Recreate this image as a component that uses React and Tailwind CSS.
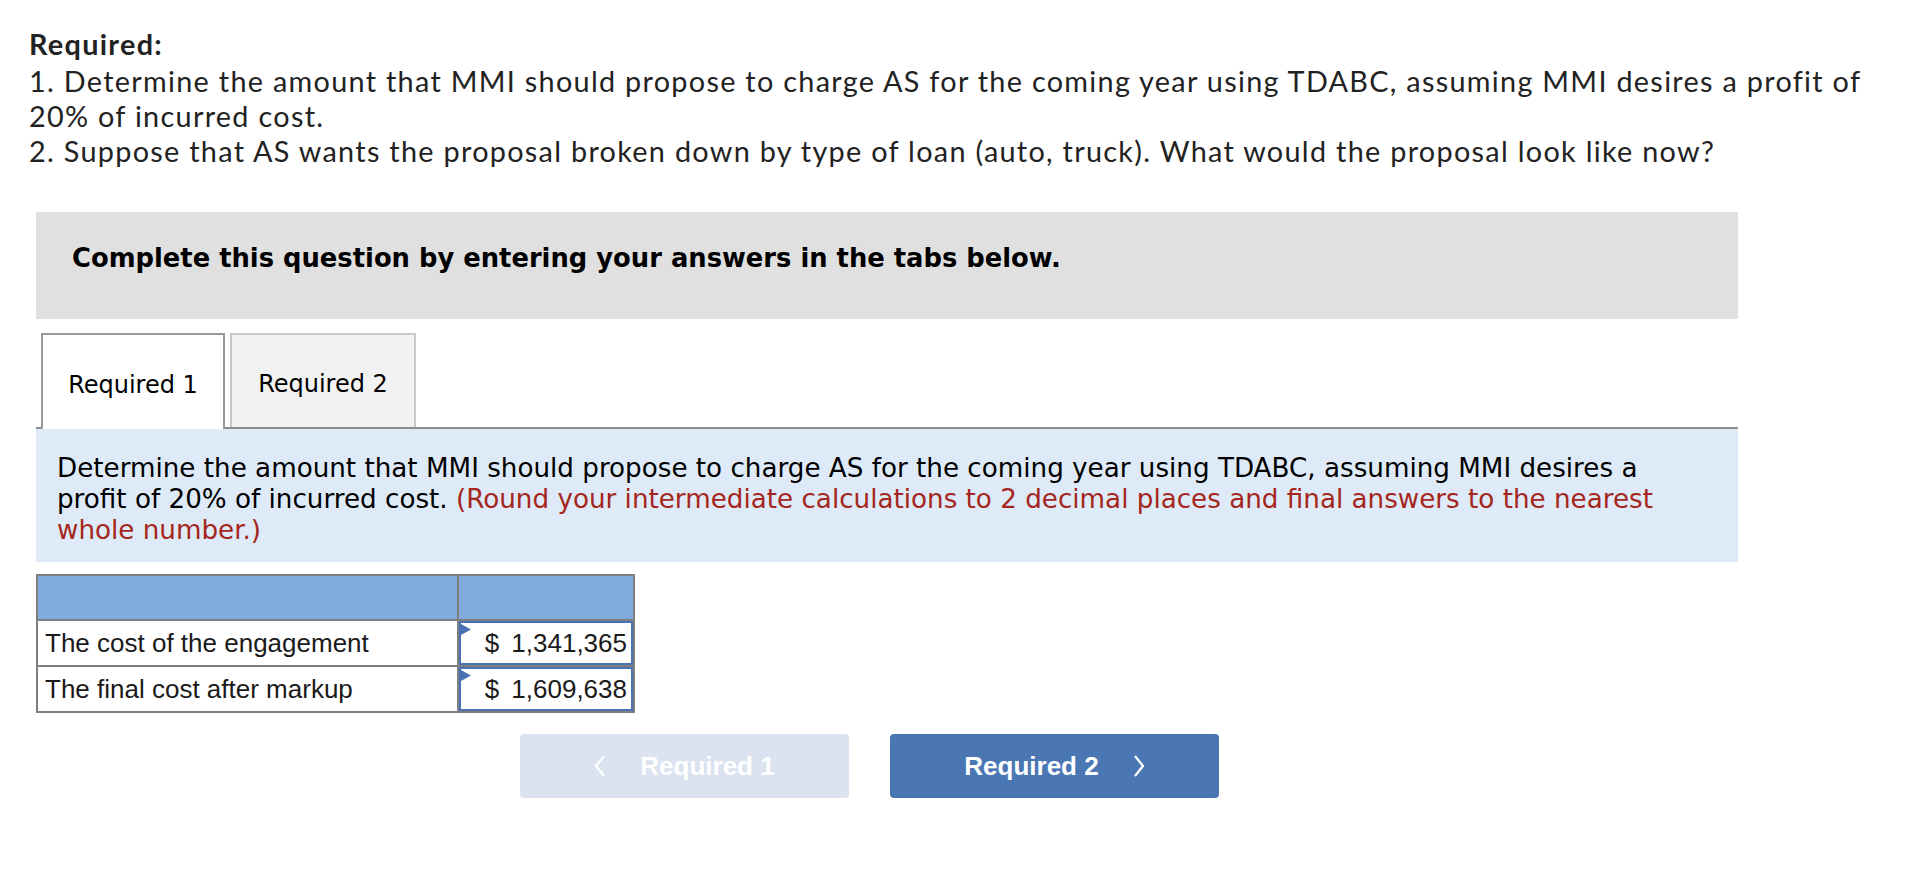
import React from "react";

const dejavu = { fontFamily: '"DejaVu Sans", Verdana, sans-serif' };

function Flag() {
  return (
    <svg className="absolute left-0 top-[1px]" width="10" height="11" viewBox="0 0 10 11">
      <polygon points="0,0 10,5.5 0,11" fill="#4a72b2" />
    </svg>
  );
}

function Chevron({ dir }) {
  return (
    <svg width="12" height="24" viewBox="0 0 12 24" className="shrink-0">
      {dir === "left" ? (
        <polyline points="10,2 2,12 10,22" fill="none" stroke="#ffffff" strokeWidth="2.2" />
      ) : (
        <polyline points="2,2 10,12 2,22" fill="none" stroke="#ffffff" strokeWidth="2.2" />
      )}
    </svg>
  );
}

export default function App() {
  return (
    <div className="w-[1922px] h-[878px] bg-white pt-[27px]">
      <div
        className="pl-[29px] text-[28.8px] leading-[35px] tracking-[1.3px] text-[#222222] whitespace-nowrap"
        style={{ fontFamily: 'Lato, "Open Sans", sans-serif' }}
      >
        <div className="font-bold">Required:</div>
        <div className="mt-[2px]">
          <div>
            1. Determine the amount that MMI should propose to charge AS for the coming year using TDABC, assuming MMI desires a profit of
          </div>
          <div>20% of incurred cost.</div>
          <div>
            2. Suppose that AS wants the proposal broken down by type of loan (auto, truck). What would the proposal look like now?
          </div>
        </div>
      </div>

      <div className="ml-[36px] w-[1702px] mt-[43px]">
        <div className="h-[107px] bg-[#e0e0e0] pl-[36px] pt-[31px]">
          <div className="font-bold text-[25.8px] leading-[30px] text-black" style={dejavu}>
            Complete this question by entering your answers in the tabs below.
          </div>
        </div>

        <div className="mt-[14px] flex gap-[5px] pl-[5px] border-b-2 border-[#8c8c8c]">
          <div
            className="relative z-10 -mb-[2px] flex h-[96px] w-[184px] items-center justify-center border-2 border-b-0 border-[#999999] bg-white text-[24px] text-black"
            style={dejavu}
          >
            <span className="mt-[5px]">Required 1</span>
          </div>
          <div
            className="flex h-[94px] w-[186px] items-center justify-center border-2 border-b-0 border-[#c8c8c8] bg-[#f2f2f2] text-[24px] text-black"
            style={dejavu}
          >
            <span className="mt-[5px]">Required 2</span>
          </div>
        </div>

        <div
          className="h-[133px] bg-[#deeaf7] pl-[21px] pt-[24px] text-[26.2px] leading-[31px] text-black whitespace-nowrap"
          style={dejavu}
        >
          Determine the amount that MMI should propose to charge AS for the coming year using TDABC, assuming MMI desires a
          <br />
          profit of 20% of incurred cost.{" "}
          <span className="text-[#a5261c]">
            (Round your intermediate calculations to 2 decimal places and final answers to the nearest
            <br />
            whole number.)
          </span>
        </div>

        <div
          className="mt-[12px] w-[599px] border-2 border-[#7f7f7f] text-[26px] text-[#1a1a1a]"
          style={{ fontFamily: '"Liberation Sans", Arial, sans-serif' }}
        >
          <div className="flex h-[43px] bg-[#82abdd]">
            <div className="w-[421px] border-r-2 border-[#7f7f7f]" />
            <div className="flex-1" />
          </div>
          {[
            ["The cost of the engagement", "1,341,365"],
            ["The final cost after markup", "1,609,638"],
          ].map(([label, val]) => (
            <div key={label} className="flex h-[46px] border-t-2 border-[#7f7f7f]">
              <div className="flex w-[421px] items-center border-r-2 border-[#7f7f7f] pl-[7px]">
                {label}
              </div>
              <div className="relative flex flex-1 items-center justify-end border-2 border-[#4a72b2] bg-white pr-[4px]">
                <Flag />
                <span>$</span>
                <span className="ml-[12px]">{val}</span>
              </div>
            </div>
          ))}
        </div>

        <div
          className="mt-[21px] ml-[484px] flex gap-[41px] text-[26px] font-bold text-white"
          style={{ fontFamily: '"Liberation Sans", Arial, sans-serif' }}
        >
          <div className="flex h-[64px] w-[329px] items-center justify-center gap-[34px] rounded-[4px] bg-[#dae3ef]">
            <Chevron dir="left" />
            <span>Required 1</span>
          </div>
          <div className="flex h-[64px] w-[329px] items-center justify-center gap-[34px] rounded-[4px] bg-[#4a76b4]">
            <span>Required 2</span>
            <Chevron dir="right" />
          </div>
        </div>
      </div>
    </div>
  );
}
